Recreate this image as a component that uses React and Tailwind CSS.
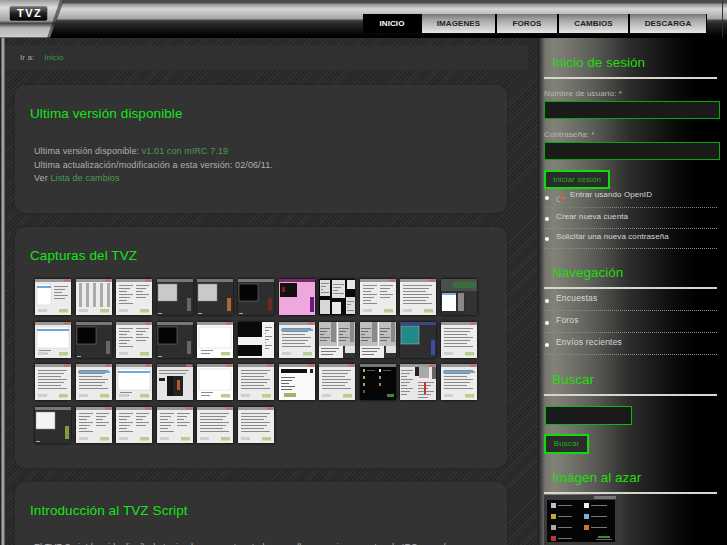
const stripes =
  "bg-[#282828] bg-[repeating-linear-gradient(135deg,#333333_0px,#333333_1px,#272727_1px,#272727_3px)]";

// each kind is drawn roughly like the tiny screenshot it stands for
const thumbs = [
  "list", "table", "form", "dark", "darkOrange", "darkRed", "pink", "multi", "form2", "text", "dual",
  "list2", "darkWin", "form3", "darkWin", "white", "blackBoxes", "text2", "gray", "gray", "teal", "text",
  "text", "list3", "table2", "darkList", "white", "text3", "mirc", "text", "blackMenu", "busy", "list4",
  "mini", "form4", "form5", "form6", "table3", "text",
];

function Lines({ x, y, w, n, color = "#8a8a8a", step = 3 }) {
  const rows = [];
  for (let i = 0; i < n; i++) {
    rows.push(<rect key={i} x={x} y={y + i * step} width={w - (i % 3) * 3} height="1" fill={color} />);
  }
  return <>{rows}</>;
}

function TitleBar({ dark }) {
  return (
    <>
      <rect width="36" height="3" fill={dark ? "#555" : "#999"} />
      <rect x="29" y="0.5" width="6" height="2" fill="#c66" />
    </>
  );
}

function Thumb({ kind }) {
  let body;
  if (kind === "dark" || kind === "darkOrange" || kind === "darkRed" || kind === "darkWin" || kind === "mini") {
    const inner = kind === "darkRed" || kind === "darkWin" ? "#050505" : kind === "mini" ? "#f4f4f4" : "#c9c9c9";
    const side = kind === "darkOrange" ? "#a7683a" : kind === "darkRed" ? "#6b2a2a" : kind === "mini" ? "#7b9b44" : "#666";
    body = (
      <>
        <rect width="36" height="36" fill="#2e2e2e" />
        <rect width="36" height="3" fill="#777" />
        <rect x="1" y="5" width="19" height="17" fill={inner} stroke="#888" strokeWidth="0.5" />
        <rect x="30" y="19" width="4" height="13" fill={side} />
        <rect x="1" y="34" width="4" height="1" fill="#aaa" />
      </>
    );
  } else if (kind === "pink") {
    body = (
      <>
        <rect width="36" height="36" fill="#f0a8dc" />
        <rect x="1" y="4" width="17" height="14" fill="#111" />
        <rect x="3" y="8" width="3" height="5" fill="#8a1c1c" />
        <rect x="31" y="18" width="4" height="15" fill="#6a1a80" />
        <rect width="36" height="3" fill="#7d2a6d" />
      </>
    );
  } else if (kind === "multi") {
    body = (
      <>
        <rect width="36" height="36" fill="#0a0a0a" />
        <rect x="1" y="1" width="10" height="16" fill="#ddd" />
        <rect x="13" y="1" width="13" height="18" fill="#e2e2e2" />
        <rect x="28" y="1" width="8" height="9" fill="#e6e6e6" />
        <rect x="1" y="21" width="10" height="14" fill="#d8d8d8" />
        <rect x="13" y="23" width="9" height="12" fill="#e8e8e8" />
        <rect x="27" y="18" width="9" height="17" fill="#ddd" />
        <Lines x={2} y={4} w={8} n={4} />
        <Lines x={14} y={5} w={11} n={4} />
        <Lines x={28} y={22} w={7} n={4} />
      </>
    );
  } else if (kind === "dual") {
    body = (
      <>
        <rect width="36" height="12" fill="#4a4f4a" />
        <rect x="12" y="3" width="23" height="6" fill="#3c6a45" />
        <rect y="12" width="24" height="24" fill="#2e2e2e" />
        <rect x="1" y="14" width="14" height="18" fill="#fff" />
        <rect x="1" y="14" width="14" height="2" fill="#7ab0dd" />
        <rect x="17" y="14" width="6" height="18" fill="#888" />
      </>
    );
  } else if (kind === "blackBoxes") {
    body = (
      <>
        <rect width="36" height="36" fill="#f2f2f2" />
        <rect width="24" height="15" fill="#0a0a0a" />
        <rect y="23" width="24" height="11" fill="#0a0a0a" />
        <Lines x={27} y={5} w={7} n={8} />
      </>
    );
  } else if (kind === "gray") {
    body = (
      <>
        <rect width="36" height="24" fill="#bfbfbf" />
        <rect x="18" width="1" height="24" fill="#fff" />
        <rect x="12" width="5" height="20" fill="#8a8a8a" />
        <rect x="31" width="4" height="20" fill="#8a8a8a" />
        <rect y="24" width="24" height="12" fill="#efefef" />
        <rect x="26" y="24" width="10" height="7" fill="#e2e2e2" />
        <Lines x={1} y={6} w={10} n={5} color="#6c6c6c" />
        <Lines x={20} y={6} w={10} n={5} color="#6c6c6c" />
        <Lines x={2} y={26} w={18} n={3} color="#777" />
      </>
    );
  } else if (kind === "teal") {
    body = (
      <>
        <rect width="36" height="36" fill="#2e2e2e" />
        <rect width="36" height="3" fill="#3a4a88" />
        <rect x="1" y="4" width="18" height="18" fill="#1f8a8a" stroke="#bbb" strokeWidth="0.5" />
        <rect x="31" y="18" width="4" height="15" fill="#3f49a8" />
      </>
    );
  } else if (kind === "darkList") {
    body = (
      <>
        <rect width="36" height="36" fill="#e4e4e4" />
        <TitleBar dark />
        <rect x="10" y="12" width="6" height="20" fill="#141414" />
        <rect x="16" y="12" width="10" height="20" fill="#222" />
        <rect x="20" y="16" width="3" height="10" fill="#b35a2a" />
        <rect x="2" y="14" width="6" height="3" fill="#222" />
        <Lines x={2} y={6} w={30} n={2} />
      </>
    );
  } else if (kind === "blackMenu") {
    body = (
      <>
        <rect width="36" height="36" fill="#060606" />
        <rect width="36" height="3" fill="#777" />
        <rect x="3" y="5" width="2" height="3" fill="#aaa" />
        <rect x="19" y="5" width="2" height="3" fill="#eee" />
        <rect x="3" y="12" width="2" height="3" fill="#c9a23a" />
        <rect x="19" y="12" width="2" height="3" fill="#6aa0d8" />
        <rect x="3" y="19" width="2" height="3" fill="#999" />
        <rect x="19" y="19" width="2" height="3" fill="#d9702a" />
        <rect x="3" y="26" width="2" height="3" fill="#555" />
        <Lines x={7} y={6} w={8} n={1} color="#555" />
        <Lines x={23} y={6} w={8} n={1} color="#555" />
        <rect x="27" y="30" width="7" height="3" fill="#3c8a3c" />
      </>
    );
  } else if (kind === "busy") {
    body = (
      <>
        <rect width="36" height="36" fill="#e8e8e8" />
        <TitleBar />
        <rect x="15" y="3" width="4" height="9" fill="#222" />
        <rect x="19" y="3" width="10" height="11" fill="#aaa" />
        <rect x="32" y="3" width="4" height="12" fill="#666" />
        <Lines x={1} y={6} w={12} n={9} />
        <Lines x={18} y={18} w={16} n={6} />
        <rect x="24" y="18" width="2" height="12" fill="#c0392b" />
      </>
    );
  } else if (kind === "mirc") {
    body = (
      <>
        <rect width="36" height="36" fill="#fafafa" />
        <TitleBar />
        <rect x="2" y="5" width="26" height="4" fill="#111" />
        <rect x="31" y="5" width="3" height="4" fill="#222" />
        <Lines x={2} y={13} w={14} n={5} color="#666" />
        <rect x="5" y="29" width="12" height="4" fill="#9fb36a" />
      </>
    );
  } else {
    // white dialogs, lists and tables
    const blue = kind.startsWith("list") || kind === "text2" || kind === "table2";
    const panel = kind === "white" || kind === "list" || kind === "list2" || kind === "table2";
    body = (
      <>
        <rect width="36" height="36" fill={kind === "white" ? "#ffffff" : "#ececec"} />
        <TitleBar />
        {panel && <rect x="2" y="5" width={kind === "list" ? 14 : 32} height="21" fill="#fff" stroke="#ccc" strokeWidth="0.5" />}
        {blue && <rect x="2" y="7" width={kind === "list" ? 14 : 32} height="2" fill="#6fa8dc" />}
        {kind === "table" &&
          [3, 10, 17, 24, 31].map((x) => <rect key={x} x={x} y="4" width="3" height="24" fill="#777" opacity="0.55" />)}
        {!panel && kind !== "table" && <Lines x={3} y={6} w={kind.startsWith("form") ? 14 : 29} n={7} />}
        {kind.startsWith("form") && <Lines x={20} y={6} w={13} n={5} />}
        {kind === "list" && <Lines x={19} y={7} w={14} n={5} />}
        {panel && kind !== "list" && <Lines x={4} y={28} w={12} n={2} />}
        <rect x="24" y="30" width="9" height="3.5" fill="#b7cf8c" />
        {kind !== "white" && <rect x="3" y="30" width="9" height="3" fill="#cfcfcf" />}
      </>
    );
  }
  return (
    <svg viewBox="0 0 36 36" className="h-[36px] w-[36px] shadow-[0_0_3px_#000] blur-[0.5px]">
      {body}
    </svg>
  );
}

function Card({ title, children, className }) {
  return (
    <section className={`mx-[15px] mb-[14px] rounded-[10px] bg-[#333333] px-[15px] shadow-[0_0_3px_#222] ${className}`}>
      <h2 className="pt-[20px] text-[13.5px] leading-[18px] tracking-[0.1px] text-[#14e614]">{title}</h2>
      {children}
    </section>
  );
}

function SideTitle({ children }) {
  return <h2 className="ml-[8px] text-[13.5px] leading-[18px] text-[#22dd0a]">{children}</h2>;
}

function Rule() {
  return <div className="mt-[5px] h-[2px] w-[173px] bg-[#d8d6cc]" />;
}

function SideList({ items, rowClass, textClass }) {
  return (
    <ul className={`w-[173px] text-[#d8d8d8] ${textClass}`}>
      {items.map((item) => (
        <li
          key={item}
          className={`flex items-center border-b border-dotted border-[#8d8d8d] pb-[2px] ${rowClass}`}
        >
          <span className="ml-[1px] mt-[4px] h-[4px] w-[4px] rounded-full bg-white" />
          <span className="ml-[7px]">{item}</span>
        </li>
      ))}
    </ul>
  );
}

export default function App() {
  return (
    <div className="h-[545px] w-[727px] overflow-hidden bg-black font-['Liberation_Sans',Arial,sans-serif]">
      {/* Header */}
      <header className="relative h-[38px] bg-[linear-gradient(#4a4a4a_0px,#4a4a4a_3px,#8f8f8f_4px,#d6d6d6_9px,#a5a5a5_19px,#4a4a4a_20px,#2a2a2a_23px,#000_36px)]">
        <svg viewBox="0 0 64 38" className="absolute left-0 top-0 h-[38px] w-[64px]">
          <defs>
            <linearGradient id="logoBar" x1="0" y1="0" x2="0" y2="1">
              <stop offset="0" stopColor="#9a9a9a" />
              <stop offset="0.2" stopColor="#dcdcdc" />
              <stop offset="0.55" stopColor="#a0a0a0" />
              <stop offset="0.62" stopColor="#444" />
              <stop offset="0.75" stopColor="#b5b5b5" />
              <stop offset="1" stopColor="#d0d0d0" />
            </linearGradient>
            <linearGradient id="logoBadge" x1="0" y1="0" x2="0" y2="1">
              <stop offset="0" stopColor="#777" />
              <stop offset="0.5" stopColor="#222" />
              <stop offset="1" stopColor="#000" />
            </linearGradient>
          </defs>
          <path d="M0 0H63.5L50 37.5H0Z" fill="url(#logoBar)" />
          <path d="M60 0H64L50.5 38H47Z" fill="#1a1a1a" opacity="0.55" />
          <rect x="9.5" y="6" width="38" height="15" rx="2" fill="url(#logoBadge)" stroke="#bbb" strokeWidth="0.5" />
        </svg>
        <span className="absolute left-[17px] top-[7px] text-[11px] font-bold leading-[13px] tracking-[1.5px] text-white">
          TVZ
        </span>
        <nav className="flex h-full justify-end pr-[20px] pt-[14px] text-[8px] font-bold tracking-[0.1px]">
          <a className="flex h-[19px] w-[58px] items-center justify-center bg-black text-white">INICIO</a>
          {[
            ["IMAGENES", "w-[75px]"],
            ["FOROS", "w-[62px]"],
            ["CAMBIOS", "w-[71px]"],
            ["DESCARGA", "w-[78px]"],
          ].map(([label, width]) => (
            <a
              key={label}
              className={`flex h-[19px] ${width} items-center justify-center border-x border-black bg-[linear-gradient(#777,#aaa_35%,#e6e6e6)] text-[#222]`}
            >
              {label}
            </a>
          ))}
        </nav>
        <div className="absolute right-[4px] top-0 h-[37px] w-px bg-[#333]" />
      </header>

      <div className="flex h-[507px]">
        {/* Main column */}
        <main className={`relative w-[538px] shrink-0 ${stripes}`}>
          <div className="absolute bottom-0 left-0 top-0 w-[5px] bg-[linear-gradient(90deg,#222_0px,#222_1px,#aaa_2px,#999_4px,#333_5px)]" />
          <div className="ml-[5px] mr-[10px] flex h-[25px] translate-y-[7px] items-center bg-[#303030] pl-[15px] text-[8px] tracking-[0.1px]">
            <span className="text-[#a8a8a8]">Ir a:</span>
            <a className="ml-[10px] text-[#3f9c48]">Inicio</a>
          </div>

          <div className="mr-[16px] mt-[22px]">
            <Card title="Ultima versión disponible" className="h-[128px]">
              <div className="ml-[4px] mt-[22px] text-[9px] leading-[13.5px] tracking-[0.1px] text-[#b0b0b0]">
                <p>
                  Ultima versión disponible: <a className="text-[#4a9c52]">v1.01 con mIRC 7.19</a>
                </p>
                <p>Ultima actualización/modificación a esta versión: 02/06/11.</p>
                <p>
                  Ver <a className="text-[#4a9c52]">Lista de cambios</a>
                </p>
              </div>
            </Card>

            <Card title="Capturas del TVZ" className="h-[241px]">
              <div className="mt-[14px] grid w-[450px] grid-cols-[repeat(11,36px)] gap-x-[4.6px] gap-y-[6.7px] pl-[5px]">
                {thumbs.map((kind, i) => (
                  <Thumb key={i} kind={kind} />
                ))}
              </div>
            </Card>

            <Card title="Introducción al TVZ Script" className="h-[200px]">
              <p className="ml-[4px] mt-[21px] whitespace-nowrap text-[9px] tracking-[0.1px] text-[#b0b0b0]">
                El TVZ Script ha sido diseñado teniendo en cuenta a todos aquellos usuarios expertos de IRC, que desean
              </p>
            </Card>
          </div>
        </main>

        {/* Sidebar */}
        <aside className="grow bg-[linear-gradient(90deg,#1c1c1c_0px,#76766e_7px,#828279_16px,#62625d_50px,#2c2c2c_92px,#0c0c0c_135px,#000_160px)] pl-[6px] pt-[16px]">
          <SideTitle>Inicio de sesión</SideTitle>
          <Rule />
          <label className="mt-[9px] block text-[8px] leading-[11px] tracking-[0.12px] text-[#b8b8b8]">
            Nombre de usuario: *
          </label>
          <input className="mt-[2px] block h-[18px] w-[176px] border border-[#0ca50c] bg-[#1a1a1a]" />
          <label className="mt-[10px] block text-[8px] leading-[11px] tracking-[0.12px] text-[#b8b8b8]">
            Contraseña: *
          </label>
          <input type="password" className="mt-[2px] block h-[18px] w-[176px] border border-[#0ca50c] bg-[#1a1a1a]" />
          <button className="mt-[10px] block h-[19px] w-[66px] border-2 border-[#0fdc0f] bg-[#2b2b2b] text-[8px] tracking-[0.1px] text-[#15b515]">
            Iniciar sesión
          </button>
          <ul className="w-[173px] text-[8px] tracking-[0.1px] text-[#d8d8d8]">
            <li className="flex h-[19px] items-center border-b border-dotted border-[#7a8a6a] pb-[3px]">
              <span className="ml-[1px] mt-[3px] h-[4px] w-[4px] rounded-full bg-white" />
              <svg viewBox="0 0 12 12" className="ml-[6px] mt-[3px] h-[11px] w-[11px]">
                <path d="M5.5 3.5 C2 4.5 1 6.5 2 8 C3 9.5 5 9.8 6.5 9.5" fill="none" stroke="#aaa" strokeWidth="1.2" />
                <path d="M6.5 1V10" stroke="#d2622a" strokeWidth="1.4" />
                <path d="M8 4.5L11.5 5.5L10.5 6.5Z" fill="#aaa" />
              </svg>
              <span className="ml-[4px] -mt-[3px]">Entrar usando OpenID</span>
            </li>
          </ul>
          <SideList
            items={["Crear nueva cuenta", "Solicitar una nueva contraseña"]}
            rowClass="h-[20.5px]"
            textClass="text-[8px] tracking-[0.1px]"
          />

          <div className="mt-[15px]">
            <SideTitle>Navegación</SideTitle>
          </div>
          <Rule />
          <SideList
            items={["Encuestas", "Foros", "Envíos recientes"]}
            rowClass="h-[22px]"
            textClass="text-[8.5px] tracking-[0.2px]"
          />

          <div className="mt-[16px]">
            <SideTitle>Buscar</SideTitle>
          </div>
          <Rule />
          <input className="ml-[1px] mt-[10px] block h-[19px] w-[87px] border border-[#0fb80f] bg-[#1a1a1a]" />
          <button className="mt-[9px] block h-[20px] w-[45px] border-2 border-[#0fdc0f] bg-[#2b2b2b] text-[8px] tracking-[0.1px] text-[#15b515]">
            Buscar
          </button>

          <div className="mt-[15px]">
            <SideTitle>Imágen al azar</SideTitle>
          </div>
          <Rule />
          <svg viewBox="0 0 74 50" className="mt-[1px] block h-[50px] w-[74px]">
            <rect width="74" height="50" fill="#3a3a3a" />
            <rect x="3" y="5" width="68" height="42" fill="#050505" />
            <rect x="50" y="1" width="22" height="3" fill="#777" />
            {[9, 20, 31, 42].map((y, i) => (
              <g key={y}>
                <rect x="7" y={y - 1} width="5" height="5" fill={["#c0c0d8", "#c9a23a", "#aaa", "#b33"][i]} />
                <rect x="14" y={y + 1} width="14" height="1" fill="#777" />
              </g>
            ))}
            {[9, 20, 31].map((y, i) => (
              <g key={y}>
                <rect x="40" y={y - 1} width="5" height="5" fill={["#eee", "#7ab0dd", "#d9702a"][i]} />
                <rect x="47" y={y + 1} width="16" height="1" fill="#777" />
              </g>
            ))}
            <rect x="54" y="41" width="12" height="2" fill="#3c8a3c" />
            <rect x="52" y="44" width="16" height="1" fill="#666" />
          </svg>
        </aside>
      </div>
    </div>
  );
}
